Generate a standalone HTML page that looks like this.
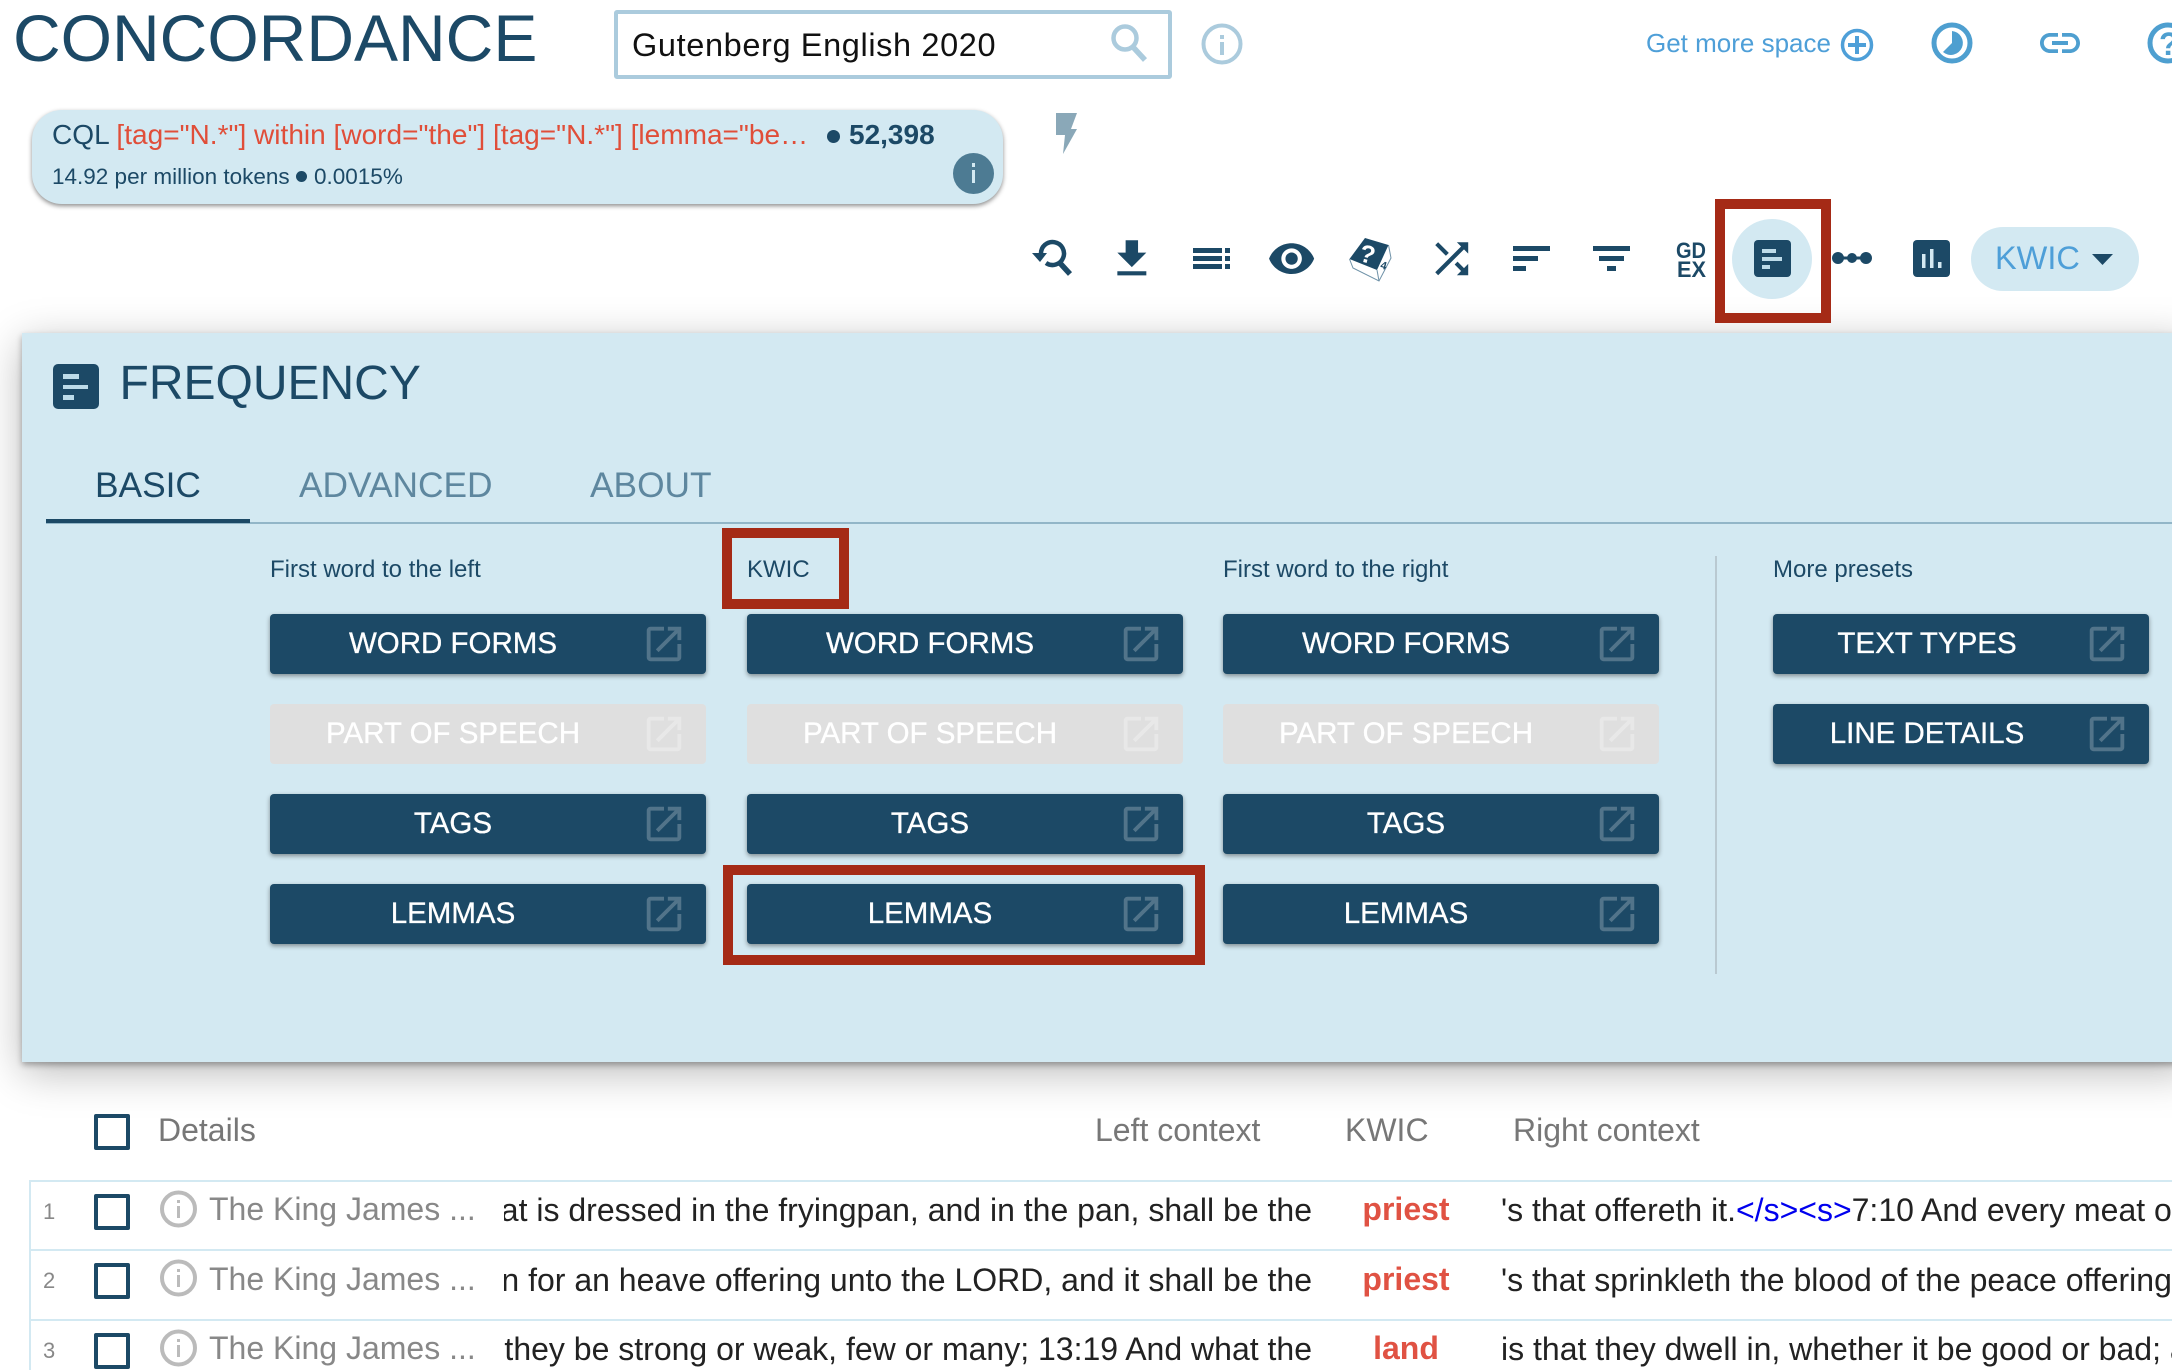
<!DOCTYPE html>
<html lang="en">
<head>
<meta charset="utf-8">
<title>Concordance</title>
<style>
html,body{margin:0;padding:0;background:#fff}
body{position:relative;width:2172px;height:1370px;overflow:hidden;font-family:"Liberation Sans",Arial,sans-serif;color:#1c4966}
.t{position:absolute;white-space:nowrap}
.abs{position:absolute}
svg{position:absolute;left:0;top:0;overflow:visible}
.panel{position:absolute;left:22px;top:333px;width:2170px;height:729px;background:#d3e9f2;box-shadow:0 3px 6px rgba(0,0,0,.3),0 10px 40px rgba(0,0,0,.28)}
.b{position:absolute;height:60px;background:#1c4966;border-radius:4px;box-shadow:0 2px 5px rgba(0,0,0,.4);color:#fff;font-size:29.5px;line-height:60px;-webkit-text-stroke:.3px #fff}
.b span{position:absolute;left:0;top:0;text-align:center}
.b.d{background:#dfdfdf;box-shadow:none}
.b svg{left:auto;right:19.5px;top:7px;width:46px;height:46px;fill:rgba(255,255,255,.24);-webkit-text-stroke:0}
.b.d svg{fill:rgba(255,255,255,.3)}
.c1{left:270px;width:436px}.c2{left:747px;width:436px}.c3{left:1223px;width:436px}.c4{left:1773px;width:376px}
.c1 span,.c2 span,.c3 span{width:366px}.c4 span{width:308px}
.r1{top:614px}.r2{top:704px}.r3{top:794px}.r4{top:884px}
.lab{font-size:24px;line-height:30px;top:554.5px}
.red{position:absolute;box-sizing:border-box;border:10px solid #a52a16}
.cb{position:absolute;left:94px;width:36px;height:36px;box-sizing:border-box;border:4px solid #1c4966;border-radius:2px}
.hd{font-size:32px;color:#777;line-height:40px;top:1110px}
.line{position:absolute;left:29px;width:2143px;height:2px;background:#d3e9f2}
.no{left:43px;font-size:22px;color:#888;line-height:30px}
.doc{left:209px;font-size:32px;color:#888;line-height:40px}
.lc{position:absolute;left:504px;width:808px;height:44px;overflow:hidden;display:flex;justify-content:flex-end;font-size:32px;line-height:44px;color:#222;white-space:nowrap}
.kw{position:absolute;left:1306px;width:200px;text-align:center;font-size:32px;font-weight:bold;color:#e05243;line-height:44px}
.rc{left:1501px;font-size:32px;line-height:44px;color:#222}
.rc b{font-weight:normal;color:#0000ee}
</style>
</head>
<body>

<div class="t" style="left:13px;top:0;font-size:66px;line-height:76px;color:#1c4966">CONCORDANCE</div>

<div class="abs" style="left:614px;top:10px;width:558px;height:69px;box-sizing:border-box;border:4px solid #abcbdd;border-radius:3px"></div>
<div class="t" style="left:632px;top:23px;font-size:32.5px;line-height:44px;color:#111;letter-spacing:.62px">Gutenberg English 2020</div>

<svg width="2172" height="1370" viewBox="0 0 2172 1370">
  <!-- top search -->
  <circle cx="1125" cy="38" r="11.5" fill="none" stroke="#abcbdd" stroke-width="4.5"/>
  <path d="M1133 47L1145 60" stroke="#abcbdd" stroke-width="5.5" fill="none"/>
  <!-- top info -->
  <circle cx="1222" cy="44" r="18.5" fill="none" stroke="#abcbdd" stroke-width="4"/>
  <rect x="1220" y="35" width="4" height="4" fill="#abcbdd"/>
  <rect x="1220" y="42" width="4" height="13" fill="#abcbdd"/>
  <!-- plus circle -->
  <circle cx="1857" cy="45" r="14.5" fill="none" stroke="#4e9fd8" stroke-width="3.5"/>
  <path d="M1857 36V54M1848 45H1866" stroke="#4e9fd8" stroke-width="4" fill="none"/>
  <!-- clock -->
  <circle cx="1952" cy="43" r="18" fill="none" stroke="#4e9fd0" stroke-width="5"/>
  <path d="M1952 43V31A12 12 0 1 1 1943 52Z" fill="#4e9fd0"/>
  <!-- link -->
  <g transform="translate(2036 19) scale(2)" fill="#4e9fd0"><path d="M3.9 12c0-1.71 1.39-3.1 3.1-3.1h4V7H7c-2.76 0-5 2.24-5 5s2.24 5 5 5h4v-1.9H7c-1.71 0-3.1-1.39-3.1-3.1zM8 13h8v-2H8v2zm9-6h-4v1.9h4c1.71 0 3.1 1.39 3.1 3.1s-1.39 3.1-3.1 3.1h-4V17h4c2.76 0 5-2.24 5-5s-2.24-5-5-5z"/></g>
  <!-- help -->
  <circle cx="2168" cy="43" r="18" fill="none" stroke="#4e9fd0" stroke-width="5"/>
  <text x="2159" y="55" font-family="Liberation Sans" font-weight="bold" font-size="32" fill="#4e9fd0">?</text>
  <!-- flash -->
  <path d="M1056 113H1077L1071 129H1077L1063 154L1065 135H1056Z" fill="#8aa8b8"/>

  <!-- toolbar: search replay -->
  <path d="M1041 254A11.5 11.5 0 1 1 1046 263" fill="none" stroke="#1c4966" stroke-width="4.5"/>
  <path d="M1032 253H1047L1040 262Z" fill="#1c4966"/>
  <path d="M1059 262L1070 274" stroke="#1c4966" stroke-width="5.5" fill="none"/>
  <!-- download -->
  <g transform="translate(1107 234) scale(2.07)" fill="#1c4966"><path d="M19 9h-4V3H9v6H5l7 7 7-7zM5 18v2h14v-2H5z"/></g>
  <!-- list -->
  <path d="M1193 248h29v5h-29zM1193 256h29v5h-29zM1193 264h29v5h-29zM1225 248h5v5h-5zM1225 256h5v5h-5zM1225 264h5v5h-5z" fill="#1c4966"/>
  <!-- eye -->
  <g transform="translate(1267 234) scale(2.05)" fill="#1c4966"><path d="M12 4.5C7 4.5 2.73 7.61 1 12c1.73 4.39 6 7.5 11 7.5s9.27-3.11 11-7.5c-1.73-4.39-6-7.5-11-7.5zM12 17c-2.76 0-5-2.24-5-5s2.24-5 5-5 5 2.24 5 5-2.24 5-5 5zm0-8c-1.66 0-3 1.34-3 3s1.34 3 3 3 3-1.34 3-3-1.34-3-3-3z"/></g>
  <!-- dice -->
  <path d="M1349.5 259L1353 268L1379 281L1391 258L1388.5 245" fill="none" stroke="#6f92a8" stroke-width="1"/>
  <path d="M1377 270L1379 281" fill="none" stroke="#6f92a8" stroke-width="1"/>
  <path d="M1365 238L1388.5 245L1377 270L1349.5 259Z" fill="#1c4966"/>
  <text x="1360" y="263" transform="rotate(14 1368 254)" font-family="Liberation Sans" font-weight="bold" font-size="25" fill="#fff">?</text>
  <text x="1381" y="269" transform="rotate(15 1383 264)" font-family="Liberation Sans" font-weight="bold" font-size="11" fill="#1c4966">4</text>
  <!-- shuffle -->
  <g transform="translate(1427 234) scale(2.06)" fill="#1c4966"><path d="M10.59 9.17L5.41 4 4 5.41l5.17 5.17 1.42-1.41zM14.5 4l2.04 2.04L4 18.59 5.41 20 17.96 7.46 20 9.5V4h-5.5zm.33 9.41l-1.41 1.41 3.13 3.13L14.5 20H20v-5.5l-2.04 2.04-3.13-3.13z"/></g>
  <!-- sort -->
  <path d="M1513 246h37v5h-37zM1513 256h25v5h-25zM1513 266h13v5h-13z" fill="#1c4966"/>
  <!-- filter -->
  <path d="M1593 246h37v5h-37zM1599 256h25v5h-25zM1607 266h9v5h-9z" fill="#1c4966"/>
  <!-- GD EX -->
  <text x="1676" y="258" font-family="Liberation Sans" font-weight="bold" font-size="22" textLength="30" lengthAdjust="spacingAndGlyphs" fill="#1c4966">GD</text>
  <text x="1677" y="277" font-family="Liberation Sans" font-weight="bold" font-size="22" textLength="29" lengthAdjust="spacingAndGlyphs" fill="#1c4966">EX</text>
  <!-- freq active -->
  <circle cx="1772" cy="259" r="40" fill="#d3e9f2"/>
  <rect x="1754" y="240" width="37" height="37" rx="4" fill="#1c4966"/>
  <path d="M1762 249h14v4h-14zM1762 257h20v4h-20zM1762 265h8v4h-8z" fill="#bcdbe9"/>
  <!-- dots -->
  <path d="M1836 258H1868" stroke="#1c4966" stroke-width="3"/>
  <circle cx="1838" cy="258" r="6" fill="#1c4966"/>
  <circle cx="1852" cy="258" r="5" fill="#1c4966"/>
  <circle cx="1866" cy="258" r="6" fill="#1c4966"/>
  <!-- chart -->
  <rect x="1913" y="240" width="37" height="37" rx="4" fill="#1c4966"/>
  <path d="M1922 254h3.5v14h-3.5zM1930 249h3.5v19h-3.5zM1938 262h3.5v6h-3.5z" fill="#d3e9f2"/>
</svg>

<div class="t" style="left:1646px;top:25px;font-size:26px;line-height:36px;color:#4e9fd8">Get more space</div>

<div class="abs" style="left:1971px;top:227px;width:168px;height:64px;border-radius:32px;background:#d3e9f2"></div>
<div class="t" style="left:1995px;top:236px;font-size:32.5px;line-height:44px;color:#4e9fd8">KWIC</div>
<svg width="2172" height="1370" viewBox="0 0 2172 1370"><path d="M2092 254H2113L2102.5 265Z" fill="#1c4966"/></svg>

<div class="abs" style="left:32px;top:110px;width:971px;height:94px;border-radius:30px;background:#d3e9f2;box-shadow:0 2px 5px rgba(0,0,0,.45)"></div>
<div class="t" style="left:52px;top:116px;font-size:28.05px;line-height:38px;color:#1c4966">CQL <span style="color:#e04e39">[tag="N.*"] within [word="the"] [tag="N.*"] [lemma="be…</span></div>
<div class="abs" style="left:827px;top:130px;width:13px;height:13px;border-radius:50%;background:#1c4966"></div>
<div class="t" style="left:849px;top:116px;font-size:28px;line-height:38px;font-weight:bold;color:#1c4966">52,398</div>
<div class="t" style="left:52px;top:162px;font-size:22.5px;line-height:30px;color:#1c4966">14.92 per million tokens</div>
<div class="abs" style="left:296px;top:171px;width:11px;height:11px;border-radius:50%;background:#1c4966"></div>
<div class="t" style="left:314px;top:162px;font-size:22.5px;line-height:30px;color:#1c4966">0.0015%</div>
<div class="abs" style="left:953px;top:153px;width:41px;height:41px;border-radius:50%;background:#4d7b93"></div>
<div class="abs" style="left:972px;top:163px;width:3px;height:4px;background:#d3e9f2"></div>
<div class="abs" style="left:972px;top:170px;width:3px;height:13px;background:#d3e9f2"></div>

<div class="panel"></div>

<svg width="2172" height="1370" viewBox="0 0 2172 1370">
  <rect x="53" y="364" width="46" height="45" rx="5" fill="#1c4966"/>
  <path d="M63 374h16v5h-16zM63 385h25v4h-25zM63 395h11v5h-11z" fill="#bcdbe9"/>
</svg>
<div class="t" style="left:119.5px;top:354px;font-size:48px;line-height:60px;color:#1c4966">FREQUENCY</div>

<div class="t" style="left:95px;top:464px;font-size:35.3px;line-height:44px;color:#1c4966">BASIC</div>
<div class="t" style="left:299px;top:464px;font-size:35.3px;line-height:44px;color:#5e879f">ADVANCED</div>
<div class="t" style="left:590px;top:464px;font-size:35.3px;line-height:44px;color:#5e879f">ABOUT</div>
<div class="abs" style="left:46px;top:522px;width:2126px;height:2px;background:#92b6c8"></div>
<div class="abs" style="left:46px;top:519px;width:204px;height:4px;background:#1c4966"></div>

<div class="t lab" style="left:270px">First word to the left</div>
<div class="t lab" style="left:747px">KWIC</div>
<div class="t lab" style="left:1223px">First word to the right</div>
<div class="t lab" style="left:1773px">More presets</div>

<div class="abs" style="left:1715px;top:556px;width:2px;height:418px;background:#b9c9d1"></div>

<div class="b c1 r1"><span>WORD FORMS</span><svg viewBox="0 0 24 24"><path d="M19 19H5V5h7V3H5c-1.11 0-2 .9-2 2v14c0 1.1.89 2 2 2h14c1.1 0 2-.9 2-2v-7h-2v7zM14 3v2h3.59l-9.83 9.83 1.41 1.41L19 6.41V10h2V3h-7z"/></svg></div>
<div class="b c2 r1"><span>WORD FORMS</span><svg viewBox="0 0 24 24"><path d="M19 19H5V5h7V3H5c-1.11 0-2 .9-2 2v14c0 1.1.89 2 2 2h14c1.1 0 2-.9 2-2v-7h-2v7zM14 3v2h3.59l-9.83 9.83 1.41 1.41L19 6.41V10h2V3h-7z"/></svg></div>
<div class="b c3 r1"><span>WORD FORMS</span><svg viewBox="0 0 24 24"><path d="M19 19H5V5h7V3H5c-1.11 0-2 .9-2 2v14c0 1.1.89 2 2 2h14c1.1 0 2-.9 2-2v-7h-2v7zM14 3v2h3.59l-9.83 9.83 1.41 1.41L19 6.41V10h2V3h-7z"/></svg></div>
<div class="b c4 r1"><span>TEXT TYPES</span><svg viewBox="0 0 24 24"><path d="M19 19H5V5h7V3H5c-1.11 0-2 .9-2 2v14c0 1.1.89 2 2 2h14c1.1 0 2-.9 2-2v-7h-2v7zM14 3v2h3.59l-9.83 9.83 1.41 1.41L19 6.41V10h2V3h-7z"/></svg></div>

<div class="b d c1 r2"><span>PART OF SPEECH</span><svg viewBox="0 0 24 24"><path d="M19 19H5V5h7V3H5c-1.11 0-2 .9-2 2v14c0 1.1.89 2 2 2h14c1.1 0 2-.9 2-2v-7h-2v7zM14 3v2h3.59l-9.83 9.83 1.41 1.41L19 6.41V10h2V3h-7z"/></svg></div>
<div class="b d c2 r2"><span>PART OF SPEECH</span><svg viewBox="0 0 24 24"><path d="M19 19H5V5h7V3H5c-1.11 0-2 .9-2 2v14c0 1.1.89 2 2 2h14c1.1 0 2-.9 2-2v-7h-2v7zM14 3v2h3.59l-9.83 9.83 1.41 1.41L19 6.41V10h2V3h-7z"/></svg></div>
<div class="b d c3 r2"><span>PART OF SPEECH</span><svg viewBox="0 0 24 24"><path d="M19 19H5V5h7V3H5c-1.11 0-2 .9-2 2v14c0 1.1.89 2 2 2h14c1.1 0 2-.9 2-2v-7h-2v7zM14 3v2h3.59l-9.83 9.83 1.41 1.41L19 6.41V10h2V3h-7z"/></svg></div>
<div class="b c4 r2"><span>LINE DETAILS</span><svg viewBox="0 0 24 24"><path d="M19 19H5V5h7V3H5c-1.11 0-2 .9-2 2v14c0 1.1.89 2 2 2h14c1.1 0 2-.9 2-2v-7h-2v7zM14 3v2h3.59l-9.83 9.83 1.41 1.41L19 6.41V10h2V3h-7z"/></svg></div>

<div class="b c1 r3"><span>TAGS</span><svg viewBox="0 0 24 24"><path d="M19 19H5V5h7V3H5c-1.11 0-2 .9-2 2v14c0 1.1.89 2 2 2h14c1.1 0 2-.9 2-2v-7h-2v7zM14 3v2h3.59l-9.83 9.83 1.41 1.41L19 6.41V10h2V3h-7z"/></svg></div>
<div class="b c2 r3"><span>TAGS</span><svg viewBox="0 0 24 24"><path d="M19 19H5V5h7V3H5c-1.11 0-2 .9-2 2v14c0 1.1.89 2 2 2h14c1.1 0 2-.9 2-2v-7h-2v7zM14 3v2h3.59l-9.83 9.83 1.41 1.41L19 6.41V10h2V3h-7z"/></svg></div>
<div class="b c3 r3"><span>TAGS</span><svg viewBox="0 0 24 24"><path d="M19 19H5V5h7V3H5c-1.11 0-2 .9-2 2v14c0 1.1.89 2 2 2h14c1.1 0 2-.9 2-2v-7h-2v7zM14 3v2h3.59l-9.83 9.83 1.41 1.41L19 6.41V10h2V3h-7z"/></svg></div>

<div class="b c1 r4"><span>LEMMAS</span><svg viewBox="0 0 24 24"><path d="M19 19H5V5h7V3H5c-1.11 0-2 .9-2 2v14c0 1.1.89 2 2 2h14c1.1 0 2-.9 2-2v-7h-2v7zM14 3v2h3.59l-9.83 9.83 1.41 1.41L19 6.41V10h2V3h-7z"/></svg></div>
<div class="b c2 r4"><span>LEMMAS</span><svg viewBox="0 0 24 24"><path d="M19 19H5V5h7V3H5c-1.11 0-2 .9-2 2v14c0 1.1.89 2 2 2h14c1.1 0 2-.9 2-2v-7h-2v7zM14 3v2h3.59l-9.83 9.83 1.41 1.41L19 6.41V10h2V3h-7z"/></svg></div>
<div class="b c3 r4"><span>LEMMAS</span><svg viewBox="0 0 24 24"><path d="M19 19H5V5h7V3H5c-1.11 0-2 .9-2 2v14c0 1.1.89 2 2 2h14c1.1 0 2-.9 2-2v-7h-2v7zM14 3v2h3.59l-9.83 9.83 1.41 1.41L19 6.41V10h2V3h-7z"/></svg></div>

<!-- annotation boxes -->
<div class="red" style="left:1715px;top:199px;width:116px;height:124px"></div>
<div class="red" style="left:722px;top:528px;width:127px;height:81px"></div>
<div class="red" style="left:723px;top:865px;width:482px;height:100px"></div>

<!-- table header -->
<div class="cb" style="top:1114px"></div>
<div class="t hd" style="left:158px">Details</div>
<div class="t hd" style="left:1095px">Left context</div>
<div class="t hd" style="left:1345px">KWIC</div>
<div class="t hd" style="left:1513px">Right context</div>

<!-- table lines -->
<div class="line" style="top:1180px"></div>
<div class="line" style="top:1249px"></div>
<div class="line" style="top:1319px"></div>
<div class="abs" style="left:29px;top:1180px;width:2px;height:190px;background:#d3e9f2"></div>

<!-- row 1 -->
<div class="t no" style="top:1197px">1</div>
<div class="cb" style="top:1194px"></div>
<svg width="2172" height="1370" viewBox="0 0 2172 1370"><g fill="none" stroke="#bbb" stroke-width="4"><circle cx="178.5" cy="1209" r="16.5"/><circle cx="178.5" cy="1278" r="16.5"/><circle cx="178.5" cy="1348" r="16.5"/></g><path d="M177 1200h3v3h-3zM177 1206h3v12h-3zM177 1269h3v3h-3zM177 1275h3v12h-3zM177 1339h3v3h-3zM177 1345h3v12h-3z" fill="#bbb"/></svg>
<div class="t doc" style="top:1189px">The King James ...</div>
<div class="lc" style="top:1188px"><span>that is dressed in the fryingpan, and in the pan, shall be the</span></div>
<div class="kw" style="top:1187px">priest</div>
<div class="t rc" style="top:1188px">'s that offereth it.<b>&lt;/s&gt;&lt;s&gt;</b>7:10 And every meat offering</div>

<!-- row 2 -->
<div class="t no" style="top:1266px">2</div>
<div class="cb" style="top:1263px"></div>
<div class="t doc" style="top:1259px">The King James ...</div>
<div class="lc" style="top:1258px"><span>oblation for an heave offering unto the LORD, and it shall be the</span></div>
<div class="kw" style="top:1257px">priest</div>
<div class="t rc" style="top:1258px">'s that sprinkleth the blood of the peace offering</div>

<!-- row 3 -->
<div class="t no" style="top:1336px">3</div>
<div class="cb" style="top:1333px"></div>
<div class="t doc" style="top:1328px">The King James ...</div>
<div class="lc" style="top:1327px"><span>whether they be strong or weak, few or many; 13:19 And what the</span></div>
<div class="kw" style="top:1326px">land</div>
<div class="t rc" style="top:1327px">is that they dwell in, whether it be good or bad; and</div>

</body>
</html>
